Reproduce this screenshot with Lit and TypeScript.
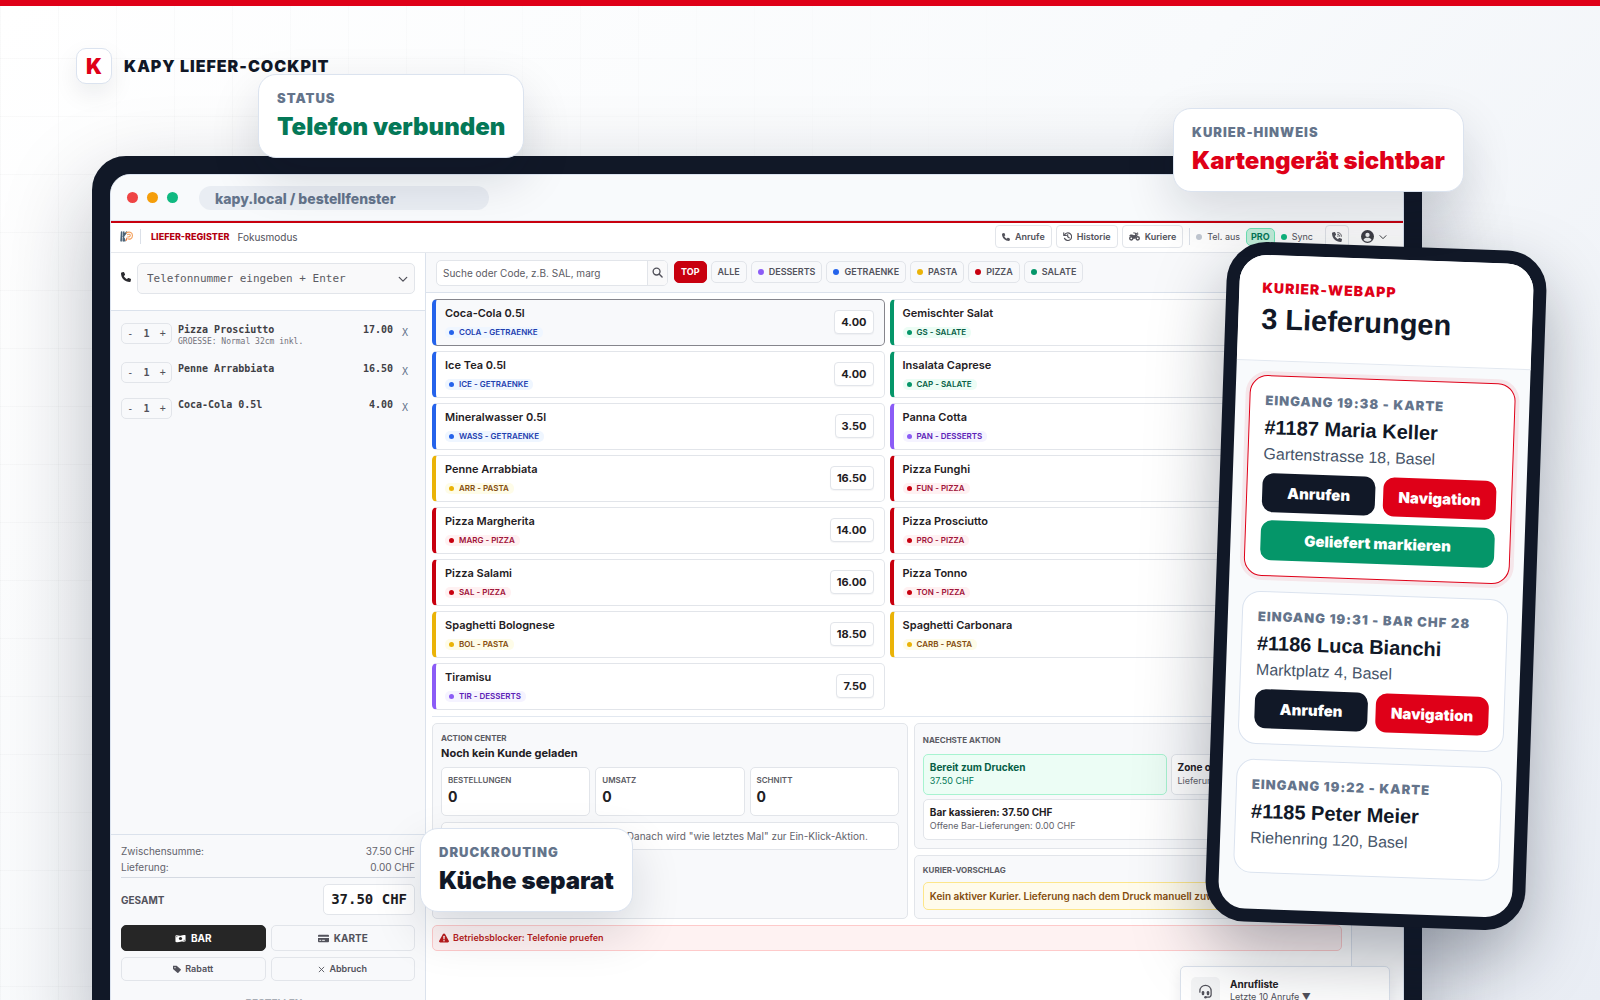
import { LitElement, html, css, svg, nothing } from "lit";
import { customElement, property } from "lit/decorators.js";
import { classMap } from "lit/directives/class-map.js";

type Category = "getraenke" | "salate" | "desserts" | "pasta" | "pizza";

interface Product {
  name: string;
  code: string;
  price: string;
  category: Category;
  selected?: boolean;
}

interface Delivery {
  meta: string;
  title: string;
  address: string;
  actions: boolean;
  active?: boolean;
}

const PRODUCTS: Product[] = [
  { name: "Coca-Cola 0.5l", code: "COLA", price: "4.00", category: "getraenke", selected: true },
  { name: "Gemischter Salat", code: "GS", price: "8.50", category: "salate" },
  { name: "Ice Tea 0.5l", code: "ICE", price: "4.00", category: "getraenke" },
  { name: "Insalata Caprese", code: "CAP", price: "12.50", category: "salate" },
  { name: "Mineralwasser 0.5l", code: "WASS", price: "3.50", category: "getraenke" },
  { name: "Panna Cotta", code: "PAN", price: "7.00", category: "desserts" },
  { name: "Penne Arrabbiata", code: "ARR", price: "16.50", category: "pasta" },
  { name: "Pizza Funghi", code: "FUN", price: "16.00", category: "pizza" },
  { name: "Pizza Margherita", code: "MARG", price: "14.00", category: "pizza" },
  { name: "Pizza Prosciutto", code: "PRO", price: "17.00", category: "pizza" },
  { name: "Pizza Salami", code: "SAL", price: "16.00", category: "pizza" },
  { name: "Pizza Tonno", code: "TON", price: "17.50", category: "pizza" },
  { name: "Spaghetti Bolognese", code: "BOL", price: "18.50", category: "pasta" },
  { name: "Spaghetti Carbonara", code: "CARB", price: "18.50", category: "pasta" },
  { name: "Tiramisu", code: "TIR", price: "7.50", category: "desserts" },
];

const CART = [
  { name: "Pizza Prosciutto", note: "GROESSE: Normal 32cm inkl.", price: "17.00" },
  { name: "Penne Arrabbiata", note: "", price: "16.50" },
  { name: "Coca-Cola 0.5l", note: "", price: "4.00" },
];

const FILTERS: { label: string; category?: Category; active?: boolean }[] = [
  { label: "TOP", active: true },
  { label: "ALLE" },
  { label: "DESSERTS", category: "desserts" },
  { label: "GETRAENKE", category: "getraenke" },
  { label: "PASTA", category: "pasta" },
  { label: "PIZZA", category: "pizza" },
  { label: "SALATE", category: "salate" },
];

const DELIVERIES: Delivery[] = [
  { meta: "EINGANG 19:38 - KARTE", title: "#1187 Maria Keller", address: "Gartenstrasse 18, Basel", actions: true, active: true },
  { meta: "EINGANG 19:31 - BAR CHF 28", title: "#1186 Luca Bianchi", address: "Marktplatz 4, Basel", actions: true },
  { meta: "EINGANG 19:22 - KARTE", title: "#1185 Peter Meier", address: "Riehenring 120, Basel", actions: false },
];

const PHONE_PATH =
  "M164.9 24.6c-7.7-18.6-28-28.5-47.4-23.2l-88 24C12.1 30.2 0 46 0 64C0 311.4 200.6 512 448 512c18 0 33.8-12.1 38.6-29.5l24-88c5.3-19.4-4.6-39.7-23.2-47.4l-96-40c-16.3-6.8-35.2-2.1-46.3 11.6L304.7 368C234.3 334.7 177.3 277.7 144 207.3L193.3 167c13.7-11.2 18.4-30 11.6-46.3l-40-96z";

const icon = (size: number, body: unknown, viewBox = "0 0 24 24") =>
  html`<svg class="icon" width=${size} height=${size} viewBox=${viewBox} aria-hidden="true">${body}</svg>`;

const line = (d: string, width = 2) =>
  svg`<path d=${d} fill="none" stroke="currentColor" stroke-width=${width} stroke-linecap="round" stroke-linejoin="round" />`;

const phoneIcon = (size: number) =>
  icon(size, svg`<path fill="currentColor" d=${PHONE_PATH} />`, "0 0 512 512");
const phoneWavesIcon = (size: number) =>
  icon(size, svg`<path fill="currentColor" d=${PHONE_PATH} />
    <path d="M290 30a195 195 0 0 1 192 192M290 115a110 110 0 0 1 107 107" fill="none" stroke="currentColor" stroke-width="46" stroke-linecap="round" />
    <circle cx="300" cy="212" r="32" fill="currentColor" />`, "0 0 512 512");
const historyIcon = () =>
  icon(9, svg`${line("M4 8a10 10 0 1 1 0 9", 3)}${line("M2 2v7h7", 3)}${line("M12.500 7v5.500l4 3", 3)}`);
const bikeIcon = () =>
  icon(11, svg`<circle cx="5" cy="16" r="3.500" fill="none" stroke="currentColor" stroke-width="3" />
    <circle cx="19" cy="16" r="3.500" fill="none" stroke="currentColor" stroke-width="3" />
    <path fill="currentColor" d="M1 9c4-2 7-1 10 0l3-1-2-3H9V3h5l5 8-3 1-2 5H9c0-4-3-6-8-6z" />${line("M15 6l4-2v4", 2)}`);
const chevronIcon = (size: number, width = 2) => icon(size, line("M3 8l9 9 9-9", width + 1));
const searchIcon = () =>
  icon(11, svg`<circle cx="10" cy="10" r="7.500" fill="none" stroke="currentColor" stroke-width="3" />${line("M16 16l6 6", 3)}`);
const userIcon = () =>
  icon(13, svg`<circle cx="12" cy="12" r="12" fill="currentColor" /><circle cx="12" cy="9" r="4" fill="#f4f5f6" /><path d="M4.500 18.500c1-3 4-4 7.500-4s6.500 1 7.500 4a10 10 0 0 1-15 0z" fill="#f4f5f6" />`);
const cashIcon = () =>
  icon(11, svg`<path fill="currentColor" d="M1 6c4-3 7 1 11 0s7-2 11-1v13c-4 2-7 0-11 1s-7 2-11 0z" /><circle cx="12" cy="12" r="3.500" fill="#262626" /><path d="M3 8h2M19 16h2" stroke="#262626" stroke-width="2" />`);
const cardIcon = () =>
  icon(11, svg`<path fill="currentColor" d="M2 4h20a2 2 0 0 1 2 2v2H0V6a2 2 0 0 1 2-2zM0 11h24v7a2 2 0 0 1-2 2H2a2 2 0 0 1-2-2z" /><path d="M3 16h4M9 16h6" stroke="#f8f9fb" stroke-width="2" />`);
const tagIcon = () =>
  icon(8, svg`<path fill="currentColor" d="M0 2h11l12 11a2 2 0 0 1 0 3l-7 7a2 2 0 0 1-3 0L0 12z" /><circle cx="6" cy="8" r="2" fill="#f8f9fb" />`);
const crossIcon = () => icon(7, line("M4 4l16 16M20 4L4 20", 3));
const warnIcon = () =>
  icon(10, svg`<path fill="currentColor" d="M12 1c1 0 2 .5 2.500 1.500l9 16c1 2 0 4-2.500 4H3c-2.500 0-3.500-2-2.500-4l9-16C10 1.500 11 1 12 1z" /><path d="M12 8v6" stroke="#fff" stroke-width="3" stroke-linecap="round" /><circle cx="12" cy="18.500" r="1.800" fill="#fff" />`);
const headsetIcon = () =>
  icon(15, svg`${line("M3 13v-2a9 9 0 0 1 18 0v6c0 3-2 4-5 4h-3", 2)}
    <rect x="6" y="11" width="4" height="7" rx="2" fill="currentColor" /><rect x="14" y="11" width="4" height="7" rx="2" fill="currentColor" /><circle cx="12" cy="21" r="2" fill="currentColor" />`);
const logoIcon = () =>
  icon(13, svg`${line("M3 4l-1 16M7 4L6 20M12 4L6 12l3 8", 3)}
    <g fill="none" stroke="#f3a05c" stroke-width="2"><path d="M11 6c5-4 12-2 12 4s-5 8-9 6" /><path d="M13 9c3-2 6-1 6 1s-3 4-5 2" /><path d="M13 14l-2 6" stroke="#e8743a" /></g>`);

/** Courier web app shown on the handheld. */
@customElement("courier-phone")
export class CourierPhone extends LitElement {
  @property({ attribute: false }) deliveries: Delivery[] = [];

  static styles = css`
    :host {
      display: block;
      box-sizing: border-box;
      border: 13px solid #111827;
      border-radius: 40px;
      background: #111827;
      box-shadow: 0 30px 70px rgba(15, 23, 42, 0.34);
      transform: rotate(2deg);
      font-family: "Liberation Sans", Arial, sans-serif;
      font-weight: 400;
      color: #111827;
    }
    .screen {
      height: 100%;
      border-radius: 27px;
      overflow: hidden;
      background: #f8fafc;
    }
    .head {
      padding: 24px 23px 25px;
      background: #fff;
      border-bottom: 1px solid #e2e8f0;
    }
    .eyebrow {
      margin: 0;
      font: 900 14px/18px Inter, sans-serif;
      letter-spacing: 1px;
      color: #df0018;
    }
    .count {
      margin: 6px 0 0;
      font-size: 29px;
      line-height: 32px;
      font-weight: 700;
    }
    .list {
      display: flex;
      flex-direction: column;
      gap: 15px;
      padding: 14px;
    }
    .order {
      padding: 16px 15px 15px;
      border: 1px solid #dbe3ef;
      border-radius: 18px;
      background: #fff;
    }
    .order.active {
      border-color: #df0018;
      box-shadow: 0 0 0 4px rgba(223, 0, 24, 0.08);
    }
    .meta {
      margin: 0;
      font: 900 13px/16px Inter, sans-serif;
      letter-spacing: 1px;
      color: #64748b;
    }
    .title {
      margin: 7px 0 5px;
      font-size: 20px;
      line-height: 24px;
      font-weight: 700;
    }
    .address {
      margin: 0 0 9px;
      font-size: 16px;
      line-height: 20px;
      color: #475569;
    }
    .actions {
      display: grid;
      grid-template-columns: 1fr 1fr;
      gap: 8px;
    }
    button {
      height: 39px;
      padding: 0;
      border: 0;
      border-radius: 11px;
      background: #111827;
      color: #fff;
      font: 900 15px/18px Inter, sans-serif;
    }
    .go {
      background: #df0018;
    }
    .done {
      grid-column: 1 / -1;
      height: 40px;
      background: #059669;
    }
  `;

  render() {
    return html`<div class="screen">
      <header class="head">
        <p class="eyebrow">KURIER-WEBAPP</p>
        <h2 class="count">3 Lieferungen</h2>
      </header>
      <div class="list">
        ${this.deliveries.map(
          (d) => html`<article class=${classMap({ order: true, active: !!d.active })}>
            <p class="meta">${d.meta}</p>
            <h3 class="title">${d.title}</h3>
            <p class="address">${d.address}</p>
            <div class="actions">
              ${d.actions ? html`<button>Anrufen</button><button class="go">Navigation</button>` : nothing}
              ${d.active ? html`<button class="done">Geliefert markieren</button>` : nothing}
            </div>
          </article>`
        )}
      </div>
    </div>`;
  }
}

/** Order window of the delivery register. */
@customElement("order-register")
export class OrderRegister extends LitElement {
  static styles = css`
    :host {
      position: relative;
      display: flex;
      flex-direction: column;
      min-height: 0;
      border-top: 2px solid #c8000f;
      background: #fff;
      color: #1f2023;
      font-family: Inter, sans-serif;
      font-size: 10px;
      font-weight: 400;
      line-height: 14px;
    }
    * {
      box-sizing: border-box;
    }
    button,
    input {
      font: inherit;
      color: inherit;
      margin: 0;
      padding: 0;
      border: 0;
      background: none;
      min-width: 0;
    }
    button {
      display: inline-flex;
      align-items: center;
      justify-content: center;
      white-space: nowrap;
    }
    .icon {
      display: block;
      flex: none;
    }
    p,
    h2,
    h3,
    dl,
    dd,
    ul {
      margin: 0;
      padding: 0;
    }
    .bar {
      display: flex;
      align-items: center;
      height: 30px;
      flex: none;
      padding: 0 16px 2px 9px;
      border-bottom: 1px solid #e6e9ee;
      color: #52525b;
    }
    .logo {
      color: #4b6478;
    }
    .sep {
      width: 1px;
      height: 15px;
      margin: 0 10px 0 7px;
      background: #dbe0e8;
    }
    .product-name {
      color: #b3000f;
      font-size: 9px;
      font-weight: 800;
      margin-right: 8px;
    }
    .tools {
      display: flex;
      align-items: center;
      margin-left: auto;
      font-size: 9px;
    }
    .tool {
      height: 23px;
      gap: 5px;
      margin-right: 4px;
      padding: 0 6px;
      border: 1px solid #e2e5ea;
      border-radius: 4px;
      font-weight: 600;
      color: #52525b;
      background: #fff;
    }
    .tools .sep {
      margin: 0 6px 0 2px;
      height: 17px;
    }
    .dot {
      display: inline-block;
      flex: none;
      width: 6px;
      height: 6px;
      border-radius: 50%;
      background: var(--tone, #c3c9d3);
    }
    .state {
      display: flex;
      align-items: center;
      gap: 5px;
      margin-right: 6px;
    }
    .online {
      --tone: #10b981;
      margin-right: 12px;
    }
    .plan {
      margin-right: 6px;
      padding: 1px 4px;
      border: 1px solid #6ee7b7;
      border-radius: 5px;
      background: #c6f3de;
      color: #047857;
      font-weight: 700;
    }
    .tool.call {
      width: 24px;
      padding: 0;
      margin-right: 12px;
    }
    .account {
      gap: 5px;
      color: #3f3f46;
    }
    .body {
      display: grid;
      grid-template-columns: 315px minmax(0, 1fr) 52px;
      flex: 1;
      min-height: 0;
    }
    .cart {
      display: flex;
      flex-direction: column;
      border-right: 1px solid #dbe2ec;
      background: #f8f9fb;
    }
    .lookup {
      display: flex;
      align-items: flex-start;
      gap: 6px;
      padding: 10px 10px 16px;
      border-bottom: 1px solid #dbe2ec;
      background: #fff;
      color: #2b2b2f;
    }
    .lookup > .icon {
      margin-top: 9px;
    }
    .number {
      display: flex;
      flex: 1;
      align-items: center;
      height: 31px;
      padding: 0 6px 0 9px;
      border: 1px solid #e2e5ea;
      border-radius: 5px;
      background: #f9f9fa;
      color: #52525b;
    }
    .number input {
      flex: 1;
      font: 11px/16px "DejaVu Sans Mono", monospace;
    }
    input::placeholder {
      color: #5b5b63;
      opacity: 1;
    }
    .items {
      display: flex;
      flex: 1;
      flex-direction: column;
      gap: 15px;
      padding: 12px 16px 0 10px;
      list-style: none;
    }
    .item {
      display: flex;
      align-items: flex-start;
      font-family: "DejaVu Sans Mono", monospace;
      line-height: 13px;
      font-weight: 700;
      color: #404045;
    }
    .stepper {
      display: flex;
      align-items: center;
      justify-content: space-around;
      width: 51px;
      height: 21px;
      margin-right: 6px;
      border: 1px solid #e2e5ea;
      border-radius: 5px;
      color: #52525b;
      font-weight: 400;
    }
    .qty {
      font-weight: 700;
    }
    .item-text {
      flex: 1;
    }
    .item-note {
      display: block;
      font-size: 8px;
      line-height: 11px;
      font-weight: 400;
      color: #71717a;
    }
    .remove {
      width: 8px;
      margin: 3px 0 0 8px;
      font-weight: 400;
      color: #64748b;
    }
    .totals {
      padding: 8px 10px 10px;
      border-top: 1px solid #dbe2ec;
      color: #63636b;
    }
    .total-row {
      display: flex;
      align-items: center;
      justify-content: space-between;
      line-height: 16px;
    }
    .grand {
      margin-top: 2px;
      padding: 6px 0 10px;
      border-top: 1px solid #d5dae2;
    }
    .grand dt {
      font-weight: 700;
      color: #52525b;
    }
    .grand dd {
      padding: 0 7px;
      border: 1px solid #e2e5ea;
      border-radius: 5px;
      background: #fff;
      color: #1c1c1f;
      font: 700 14px/29px "DejaVu Sans Mono", monospace;
    }
    .pay {
      display: grid;
      grid-template-columns: 1fr 1fr;
      gap: 6px 5px;
    }
    .pay button {
      height: 24px;
      gap: 4px;
      border: 1px solid #e2e5ea;
      border-radius: 5px;
      color: #52525b;
      font-size: 9px;
      font-weight: 600;
    }
    .pay .method {
      height: 26px;
      gap: 5px;
      font-size: 10px;
      font-weight: 700;
    }
    .pay .chosen {
      border-color: #262626;
      background: #262626;
      color: #fff;
    }
    .pay .submit {
      grid-column: 1 / -1;
      height: 32px;
      border: 0;
      font-size: 10px;
      font-weight: 700;
      color: #a8adb5;
    }
    .filters {
      display: flex;
      align-items: center;
      gap: 4px;
      height: 40px;
      padding: 0 10px;
      border-bottom: 1px solid #dbe2ec;
      background: #f8f9fb;
    }
    .search {
      display: flex;
      width: 232px;
      height: 26px;
      margin-right: 2px;
      border: 1px solid #e2e5ea;
      border-radius: 5px;
      background: #fff;
      overflow: hidden;
    }
    .search input {
      flex: 1;
      padding: 0 6px;
    }
    .search button {
      width: 20px;
      border-left: 1px solid #e2e5ea;
      background: #f9f9fa;
      color: #52525b;
    }
    .chips {
      display: flex;
      gap: 4px;
      padding-bottom: 2px;
    }
    .chip {
      height: 22px;
      gap: 5px;
      padding: 0 6px;
      border: 1px solid #e2e5ea;
      border-radius: 5px;
      color: #52525b;
      font-size: 9px;
      font-weight: 600;
    }
    .chip.active {
      border-color: #c8000f;
      background: #c8000f;
      color: #fff;
      font-weight: 700;
    }
    .getraenke {
      --tone: #2563eb;
      --ink: #1e40af;
      --wash: #eff6ff;
    }
    .salate {
      --tone: #059669;
      --ink: #065f46;
      --wash: #ecfdf5;
    }
    .desserts {
      --tone: #8b5cf6;
      --ink: #5b21b6;
      --wash: #f5f3ff;
    }
    .pasta {
      --tone: #eab308;
      --ink: #854d0e;
      --wash: #fefce8;
    }
    .pizza {
      --tone: #c8000f;
      --ink: #9f1239;
      --wash: #fff1f2;
    }
    .rail {
      border-left: 1px solid #dbe2ec;
      background: #f8f9fb;
    }
    .content {
      padding: 6px 9px 0 6px;
    }
    .products {
      display: grid;
      grid-template-columns: 1fr 1fr;
      gap: 5px;
      padding-bottom: 6px;
      border-bottom: 1px solid #e2e8f0;
    }
    .product {
      display: flex;
      align-items: center;
      justify-content: space-between;
      height: 47px;
      padding: 0 10px 1px 9px;
      border: 1px solid #e2e5ea;
      border-left: 4px solid var(--tone);
      border-radius: 5px;
      background: #fff;
      text-align: left;
    }
    .product.selected {
      border-color: #85858c;
      border-left-color: var(--tone);
      background: #f8f9fb;
    }
    .product-title {
      display: block;
      margin-bottom: 6px;
      font-size: 11px;
      line-height: 15px;
      font-weight: 600;
    }
    .tag {
      display: flex;
      align-items: center;
      gap: 5px;
      width: max-content;
      padding: 0 5px 0 4px;
      border-radius: 5px;
      background: var(--wash);
      color: var(--ink);
      font-size: 8px;
      line-height: 11px;
      font-weight: 600;
    }
    .tag .dot {
      width: 5px;
      height: 5px;
    }
    .price {
      padding: 0 6px;
      border: 1px solid #e2e5ea;
      border-radius: 4px;
      background: #fff;
      font-size: 11px;
      line-height: 22px;
      font-weight: 700;
      box-shadow: 0 1px 1px rgba(15, 23, 42, 0.04);
    }
    .panels {
      display: grid;
      grid-template-columns: 10fr 9fr;
      gap: 6px;
      margin: 6px 0;
    }
    .stack {
      display: flex;
      flex-direction: column;
      gap: 6px;
      min-width: 0;
    }
    .panel {
      padding: 8px;
      border: 1px solid #e2e5ea;
      border-radius: 5px;
      background: #f8f9fb;
    }
    .label {
      font-size: 8px;
      line-height: 12px;
      font-weight: 700;
      color: #5b5b63;
    }
    .panel-title {
      font-size: 11px;
      line-height: 18px;
      font-weight: 700;
    }
    .stats {
      display: grid;
      grid-template-columns: repeat(3, 1fr);
      gap: 5px;
      margin: 5px 0 6px;
    }
    .box {
      border: 1px solid #e2e5ea;
      border-radius: 5px;
      background: #fff;
      padding: 6px;
    }
    .stat {
      height: 49px;
    }
    .stat .label {
      font-weight: 600;
    }
    .stat dd {
      font-size: 14px;
      line-height: 22px;
      font-weight: 700;
    }
    .note {
      padding-right: 30px;
      text-align: right;
      color: #63636b;
    }
    .next .label {
      padding: 2px 0;
    }
    .tasks {
      display: grid;
      grid-template-columns: 3fr 2fr;
      gap: 4px;
      margin-top: 6px;
    }
    .task {
      font-size: 9px;
      height: 41px;
      overflow: hidden;
      white-space: nowrap;
      color: #63636b;
    }
    .task h3 {
      font-size: 10px;
      line-height: 13px;
      font-weight: 700;
      color: #1f2023;
    }
    .ready {
      border-color: #a7f3d0;
      background: #ecfdf5;
      color: #047857;
    }
    .ready h3 {
      color: #065f46;
    }
    .wide {
      grid-column: 1 / -1;
    }
    .hint {
      height: 28px;
      margin-top: 6px;
      overflow: hidden;
      white-space: nowrap;
      border-color: #fde68a;
      background: #fffbeb;
      color: #854d0e;
      font-weight: 600;
    }
    .blocker {
      display: flex;
      align-items: center;
      gap: 4px;
      height: 26px;
      padding: 0 6px;
      border: 1px solid #fecaca;
      border-radius: 5px;
      background: #fef2f2;
      color: #b91c1c;
      font-size: 9px;
      font-weight: 600;
    }
    .calls {
      position: absolute;
      right: 13px;
      bottom: 5px;
      display: flex;
      gap: 10px;
      width: 210px;
      height: 58px;
      padding: 10px;
      border: 1px solid #dbe2ec;
      border-radius: 5px;
      background: #fff;
      box-shadow: 0 4px 14px rgba(15, 23, 42, 0.08);
      font-size: 9px;
      line-height: 12px;
      color: #52525b;
    }
    .calls h3 {
      font-size: 10px;
      line-height: 14px;
      color: #1f2023;
    }
    .calls-icon {
      display: grid;
      place-items: center;
      width: 29px;
      height: 29px;
      border-radius: 5px;
      background: #f4f5f6;
    }
  `;

  private product(p: Product) {
    return html`<button class=${classMap({ product: true, [p.category]: true, selected: !!p.selected })}>
      <span>
        <span class="product-title">${p.name}</span>
        <span class="tag"><i class="dot"></i>${p.code} - ${p.category.toUpperCase()}</span>
      </span>
      <span class="price">${p.price}</span>
    </button>`;
  }

  private header() {
    return html`<header class="bar">
      <span class="logo">${logoIcon()}</span><i class="sep"></i>
      <span class="product-name">LIEFER-REGISTER</span><span>Fokusmodus</span>
      <div class="tools">
        <button class="tool">${phoneIcon(8)}Anrufe</button>
        <button class="tool">${historyIcon()}Historie</button>
        <button class="tool">${bikeIcon()}Kuriere</button>
        <i class="sep"></i>
        <span class="state"><i class="dot"></i>Tel. aus</span>
        <span class="plan">PRO</span>
        <span class="state online"><i class="dot"></i>Sync</span>
        <button class="tool call" aria-label="Telefonie">${phoneWavesIcon(10)}</button>
        <button class="account" aria-label="Konto">${userIcon()}${chevronIcon(8)}</button>
      </div>
    </header>`;
  }

  private cart() {
    return html`<aside class="cart">
      <div class="lookup">
        ${phoneIcon(10)}
        <label class="number">
          <input type="tel" aria-label="Telefonnummer" placeholder="Telefonnummer eingeben + Enter" />
          ${chevronIcon(10)}
        </label>
      </div>
      <ul class="items">
        ${CART.map(
          (i) => html`<li class="item">
            <span class="stepper"><button aria-label="Weniger">-</button><span class="qty">1</span><button aria-label="Mehr">+</button></span>
            <span class="item-text">${i.name}${i.note ? html`<small class="item-note">${i.note}</small>` : nothing}</span>
            <span>${i.price}</span>
            <button class="remove" aria-label="Entfernen">X</button>
          </li>`
        )}
      </ul>
      <section class="totals">
        <dl>
          <div class="total-row"><dt>Zwischensumme:</dt><dd>37.50 CHF</dd></div>
          <div class="total-row"><dt>Lieferung:</dt><dd>0.00 CHF</dd></div>
          <div class="total-row grand"><dt>GESAMT</dt><dd>37.50 CHF</dd></div>
        </dl>
        <div class="pay">
          <button class="method chosen">${cashIcon()}BAR</button>
          <button class="method">${cardIcon()}KARTE</button>
          <button>${tagIcon()}Rabatt</button>
          <button>${crossIcon()}Abbruch</button>
          <button class="submit">${icon(8, line("M4 13l5 5L20 6", 3))}BESTELLEN</button>
        </div>
      </section>
    </aside>`;
  }

  private panels() {
    return html`<div class="panels">
      <section class="panel">
        <p class="label">ACTION CENTER</p>
        <h2 class="panel-title">Noch kein Kunde geladen</h2>
        <dl class="stats">
          ${["BESTELLUNGEN", "UMSATZ", "SCHNITT"].map(
            (s) => html`<div class="box stat"><dt class="label">${s}</dt><dd>0</dd></div>`
          )}
        </dl>
        <p class="box note">Danach wird "wie letztes Mal" zur Ein-Klick-Aktion.</p>
      </section>
      <div class="stack">
        <section class="panel next">
          <p class="label">NAECHSTE AKTION</p>
          <div class="tasks">
            <div class="box task ready"><h3>Bereit zum Drucken</h3><p>37.50 CHF</p></div>
            <div class="box task"><h3>Zone offen</h3><p>Lieferung</p></div>
            <div class="box task wide"><h3>Bar kassieren: 37.50 CHF</h3><p>Offene Bar-Lieferungen: 0.00 CHF</p></div>
          </div>
        </section>
        <section class="panel">
          <p class="label">KURIER-VORSCHLAG</p>
          <p class="box hint">Kein aktiver Kurier. Lieferung nach dem Druck manuell zuweisen.</p>
        </section>
      </div>
    </div>`;
  }

  render() {
    return html`${this.header()}
      <div class="body">
        ${this.cart()}
        <main>
          <div class="filters">
            <div class="search">
              <input type="search" aria-label="Artikelsuche" placeholder="Suche oder Code, z.B. SAL, marg" />
              <button aria-label="Suchen">${searchIcon()}</button>
            </div>
            <div class="chips">
              ${FILTERS.map(
                (f) => html`<button class=${classMap({ chip: true, active: !!f.active, [f.category ?? "all"]: true })}>
                  ${f.category ? html`<i class="dot"></i>` : nothing}${f.label}
                </button>`
              )}
            </div>
          </div>
          <div class="content">
            <div class="products">${PRODUCTS.map((p) => this.product(p))}</div>
            ${this.panels()}
            <p class="blocker">${warnIcon()}Betriebsblocker: Telefonie pruefen</p>
          </div>
        </main>
        <div class="rail"></div>
      </div>
      <section class="calls">
        <span class="calls-icon">${headsetIcon()}</span>
        <div><h3>Anrufliste</h3><p>Letzte 10 Anrufe ▼</p></div>
      </section>`;
  }
}

@customElement("app-root")
export class AppRoot extends LitElement {
  static styles = css`
    :host {
      display: block;
    }
    * {
      box-sizing: border-box;
    }
    .stage {
      position: relative;
      display: flex;
      flex-direction: column;
      height: 100vh;
      overflow: hidden;
      border-top: 6px solid #df0018;
      background: linear-gradient(135deg, #ffffff 0%, #f8fafc 48%, #e9edf4 100%);
      color: #111827;
      font-family: Inter, sans-serif;
      font-weight: 900;
    }
    .grid {
      position: absolute;
      inset: -6px 0 0;
      background-image: linear-gradient(90deg, rgba(17, 24, 39, 0.025) 1px, transparent 1px),
        linear-gradient(rgba(17, 24, 39, 0.025) 1px, transparent 1px);
      background-size: 58px 58px;
      mask-image: linear-gradient(90deg, #000, transparent 70%);
    }
    .brand {
      position: relative;
      display: flex;
      align-items: center;
      gap: 12px;
      padding: 42px 76px 72px;
      font-size: 16px;
      line-height: 36px;
      letter-spacing: 1px;
    }
    .mark {
      width: 36px;
      height: 36px;
      border: 1px solid #dbe3ef;
      border-radius: 10px;
      background: #fff;
      box-shadow: 0 10px 24px rgba(15, 23, 42, 0.08);
      color: #df0018;
      font-size: 21px;
      line-height: 36px;
      letter-spacing: 0;
      text-align: center;
    }
    .laptop {
      position: relative;
      display: flex;
      flex: 1;
      min-height: 0;
      margin: 0 178px -48px 92px;
      border: 18px solid #111827;
      border-radius: 34px;
      background: #111827;
      box-shadow: 0 34px 90px rgba(15, 23, 42, 0.28);
    }
    .window {
      display: flex;
      flex: 1;
      flex-direction: column;
      min-width: 0;
      border: 1px solid #dbe3ef;
      border-radius: 20px;
      background: #fff;
      overflow: hidden;
    }
    .chrome {
      display: flex;
      align-items: center;
      gap: 9px;
      height: 46px;
      flex: none;
      padding: 0 16px;
      background: #f8fafc;
      border-bottom: 1px solid #dbe3ef;
    }
    .light {
      width: 11px;
      height: 11px;
      border-radius: 50%;
      background: #ef4444;
    }
    .light.amber {
      background: #f59e0b;
    }
    .light.green {
      background: #10b981;
    }
    .url {
      width: 290px;
      margin-left: 12px;
      padding: 1px 16px 0;
      border-radius: 12px;
      background: #e9edf3;
      color: #64748b;
      font-size: 14px;
      line-height: 23px;
      font-weight: 800;
    }
    order-register {
      flex: 1;
    }
    courier-phone {
      position: absolute;
      top: 240px;
      right: 64px;
      width: 320px;
      height: 680px;
    }
    .callout {
      position: absolute;
      padding: 14px 18px 17px;
      border: 1px solid #dbe3ef;
      border-radius: 18px;
      background: #fff;
      box-shadow: 0 20px 50px rgba(15, 23, 42, 0.14);
      white-space: nowrap;
    }
    .callout p {
      margin: 0 0 7px;
      font-size: 13px;
      line-height: 18px;
      letter-spacing: 1px;
      color: #64748b;
    }
    .callout strong {
      display: block;
      font-size: 24px;
      line-height: 26px;
      font-weight: 900;
    }
    .status {
      top: 68px;
      left: 258px;
      color: #047857;
    }
    .courier {
      top: 102px;
      right: 136px;
      color: #df0018;
    }
    .print {
      bottom: 88px;
      left: 420px;
    }
  `;

  render() {
    return html`<div class="stage">
      <div class="grid"></div>
      <header class="brand"><span class="mark">K</span>KAPY LIEFER-COCKPIT</header>
      <section class="laptop">
        <div class="window">
          <div class="chrome">
            <i class="light"></i><i class="light amber"></i><i class="light green"></i>
            <span class="url">kapy.local / bestellfenster</span>
          </div>
          <order-register></order-register>
        </div>
      </section>
      <div class="callout print"><p>DRUCKROUTING</p><strong>Küche separat</strong></div>
      <courier-phone .deliveries=${DELIVERIES}></courier-phone>
      <div class="callout status"><p>STATUS</p><strong>Telefon verbunden</strong></div>
      <div class="callout courier"><p>KURIER-HINWEIS</p><strong>Kartengerät sichtbar</strong></div>
    </div>`;
  }
}
